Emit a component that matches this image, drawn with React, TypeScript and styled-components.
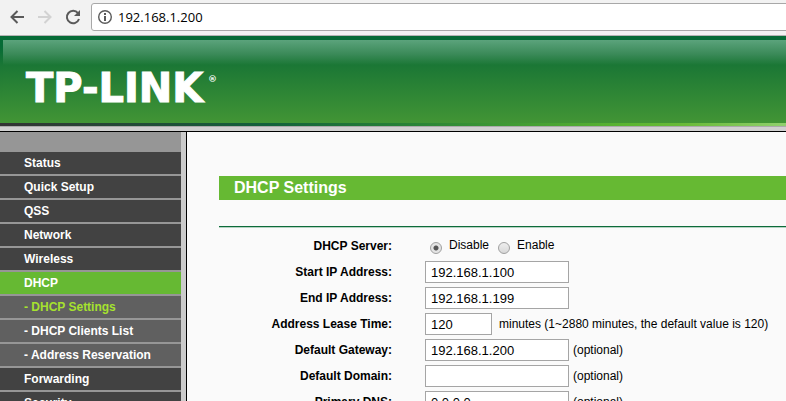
import React from 'react';
import styled, { createGlobalStyle } from 'styled-components';

const GlobalStyle = createGlobalStyle`
  * { box-sizing: border-box; }
  body {
    margin: 0;
    overflow: hidden;
    background: #fafafa;
    color: #000;
    font-family: 'Liberation Sans', Arial, sans-serif;
    font-size: 12px;
  }
`;

const Page = styled.div`
  display: flex;
  flex-direction: column;
  height: 100vh;
  overflow: hidden;
`;

const BrowserBar = styled.div`
  display: flex;
  align-items: center;
  flex: none;
  height: 36px;
  padding-left: 8px;
  padding-bottom: 1px;
  background: #f2f2f2;
  border-bottom: 1px solid #b4b4b4;
`;

const ToolButton = styled.button<{ $muted?: boolean }>`
  display: flex;
  width: 28px;
  padding: 0;
  border: 0;
  background: none;
  color: ${({ $muted }) => ($muted ? '#d2d2d2' : '#5a5a5a')};
`;

const AddressBox = styled.label`
  display: flex;
  align-items: center;
  flex: 1;
  height: 28px;
  margin-right: -4px;
  margin-left: -1px;
  padding-left: 5px;
  gap: 5px;
  background: #fff;
  border: 1px solid #a8a8a8;
  border-radius: 3px;
`;

const AddressInput = styled.input`
  flex: 1;
  padding: 0;
  border: 0;
  outline: 0;
  background: none;
  font: 13px/20px 'Open Sans', 'Noto Sans', sans-serif;
  color: #000;
`;

const Banner = styled.header`
  flex: none;
  padding: 4px 0 0 3px;
  background: linear-gradient(#066b36 0, #066b36 10px, #1b7735 30px, #429535 100%);
`;

const BannerFace = styled.div`
  height: 83px;
  padding: 24px 0 0 23px;
  background: linear-gradient(#5ba37c 0, #3b8a59 14px, #1b7735 25px, #429535 100%);
`;

const Logo = styled.svg`
  display: block;
  width: 208px;
  height: 52px;
  overflow: visible;
  fill: #fff;
  stroke: #fff;
  font-family: 'DejaVu Sans', sans-serif;
  font-weight: bold;
`;

const AccentStrip = styled.div`
  flex: none;
  height: 3px;
  background: linear-gradient(90deg, #333 0, #12613b 34%, #288236 52%, #5bb531 80%, #69ba38 87%, #91d06e 100%);
`;

const Divider = styled.div`
  flex: none;
  height: 6px;
  background: #d0d0d0;
  border-top: 1px solid #aaa;
  border-bottom: 1px solid #000;
`;

const Body = styled.div`
  display: flex;
  flex: 1;
  min-height: 0;
`;

const Sidebar = styled.nav`
  flex: none;
  width: 187px;
  background: #969696;
  border-right: 1px solid #000;
`;

const SidebarInner = styled.div`
  height: 100%;
  padding-top: 20px;
  border-right: 5px solid #cbcbcb;
`;

const MenuList = styled.ul`
  display: flex;
  flex-direction: column;
  gap: 2px;
  margin: 0;
  padding: 0;
  list-style: none;
`;

type Kind = 'top' | 'active' | 'sub' | 'current';

const menuColor: Record<Kind, string> = {
  top: '#424242',
  active: '#66b933',
  sub: '#606060',
  current: '#606060',
};

const MenuLink = styled.a<{ $kind: Kind }>`
  display: block;
  height: 22px;
  padding-left: 24px;
  line-height: 22px;
  font-weight: bold;
  text-decoration: none;
  background: ${({ $kind }) => menuColor[$kind]};
  color: ${({ $kind }) => ($kind === 'current' ? '#a6e22e' : '#fff')};
`;

const Main = styled.main`
  flex: 1;
  min-width: 0;
  padding: 44px 0 0 32px;
`;

const Title = styled.h1`
  margin: 0 0 26px;
  padding-left: 15px;
  background: #66b933;
  color: #fff;
  font-size: 16px;
  line-height: 24px;
`;

const Rule = styled.hr`
  height: 2px;
  margin: 0 0 5px;
  border: 0;
  border-top: 1px solid #0d6b3a;
  background: #b5d3c2;
`;

const Row = styled.div`
  display: grid;
  grid-template-columns: 173px 1fr;
  column-gap: 33px;
  align-items: center;
  height: 26px;
`;

const Label = styled.label`
  text-align: right;
  font-weight: bold;
  line-height: 16px;
  white-space: nowrap;
`;

const Controls = styled.div`
  display: flex;
  align-items: center;
  white-space: nowrap;
`;

const Field = styled.input<{ $short?: boolean }>`
  width: ${({ $short }) => ($short ? 67 : 144)}px;
  height: 22px;
  margin-right: ${({ $short }) => ($short ? 7 : 4)}px;
  padding: 0 5px;
  border: 1px solid #a5a5a5;
  background: #fff;
  color: #000;
  font: 13px 'Liberation Sans', Arial, sans-serif;
`;

const Choice = styled.label`
  display: flex;
  align-items: center;
  gap: 7px;
  padding-left: 5px;
  padding-bottom: 2px;
  margin-right: 4px;
  line-height: 16px;
`;

const Radio = styled.input`
  appearance: none;
  width: 12px;
  height: 12px;
  margin: 5px 0 0;
  border: 1px solid #a0a0a0;
  border-radius: 50%;
  background: linear-gradient(#eee, #d8d8d8);
  &:checked {
    background: radial-gradient(circle, #555 0, #555 2px, #e4e4e4 3px);
  }
`;

const menu: { text: string; kind: Kind }[] = [
  { text: 'Status', kind: 'top' },
  { text: 'Quick Setup', kind: 'top' },
  { text: 'QSS', kind: 'top' },
  { text: 'Network', kind: 'top' },
  { text: 'Wireless', kind: 'top' },
  { text: 'DHCP', kind: 'active' },
  { text: '- DHCP Settings', kind: 'current' },
  { text: '- DHCP Clients List', kind: 'sub' },
  { text: '- Address Reservation', kind: 'sub' },
  { text: 'Forwarding', kind: 'top' },
  { text: 'Security', kind: 'top' },
];

const fields: { id: string; label: string; value: string; note?: string; short?: boolean }[] = [
  { id: 'start', label: 'Start IP Address:', value: '192.168.1.100' },
  { id: 'end', label: 'End IP Address:', value: '192.168.1.199' },
  {
    id: 'lease',
    label: 'Address Lease Time:',
    value: '120',
    note: 'minutes (1~2880 minutes, the default value is 120)',
    short: true,
  },
  { id: 'gateway', label: 'Default Gateway:', value: '192.168.1.200', note: '(optional)' },
  { id: 'domain', label: 'Default Domain:', value: '', note: '(optional)' },
  { id: 'dns', label: 'Primary DNS:', value: '0.0.0.0', note: '(optional)' },
];

const ArrowIcon = ({ forward }: { forward?: boolean }) => (
  <svg width="18" height="18" viewBox="0 0 18 18" fill="none" stroke="currentColor" strokeWidth="2">
    <path d={forward ? 'M2 9h12M8.5 3 14.5 9 8.5 15' : 'M16 9H4M9.5 3 3.5 9 9.5 15'} />
  </svg>
);

const ReloadIcon = () => (
  <svg width="18" height="18" viewBox="0 0 18 18" fill="none" stroke="currentColor" strokeWidth="2">
    <path d="M14 5.2A6.2 6.2 0 1 0 15 11" />
    <path d="M16 2v6h-6z" fill="currentColor" stroke="none" />
  </svg>
);

const InfoIcon = () => (
  <svg width="16" height="16" viewBox="0 0 16 16" fill="none" stroke="#5a5a5a">
    <circle cx="8" cy="8" r="6.3" strokeWidth="1.4" />
    <path d="M8 7v5M8 4v2" strokeWidth="2" />
  </svg>
);

export default function App() {
  return (
    <Page>
      <GlobalStyle />
      <BrowserBar>
        <ToolButton aria-label="Back"><ArrowIcon /></ToolButton>
        <ToolButton aria-label="Forward" $muted><ArrowIcon forward /></ToolButton>
        <ToolButton aria-label="Reload"><ReloadIcon /></ToolButton>
        <AddressBox>
          <InfoIcon />
          <AddressInput aria-label="Address" defaultValue="192.168.1.200" />
        </AddressBox>
      </BrowserBar>
      <Banner>
        <BannerFace>
          <Logo role="img" aria-label="TP-LINK">
            <text x="0" y="38" fontSize="40" strokeWidth="1">TP-LINK</text>
            <text x="182" y="18" fontSize="9" strokeWidth="0">®</text>
          </Logo>
        </BannerFace>
      </Banner>
      <AccentStrip />
      <Divider />
      <Body>
        <Sidebar>
          <SidebarInner>
            <MenuList>
              {menu.map(({ text, kind }) => (
                <li key={text}><MenuLink href="#" $kind={kind}>{text}</MenuLink></li>
              ))}
            </MenuList>
          </SidebarInner>
        </Sidebar>
        <Main>
          <Title>DHCP Settings</Title>
          <Rule />
          <Row role="radiogroup" aria-labelledby="server-label">
            <Label as="span" id="server-label">DHCP Server:</Label>
            <Controls>
              <Choice><Radio type="radio" name="server" defaultChecked />Disable</Choice>
              <Choice><Radio type="radio" name="server" />Enable</Choice>
            </Controls>
          </Row>
          {fields.map(({ id, label, value, note, short }) => (
            <Row key={id}>
              <Label htmlFor={id}>{label}</Label>
              <Controls>
                <Field id={id} defaultValue={value} $short={short} />
                {note && <span>{note}</span>}
              </Controls>
            </Row>
          ))}
        </Main>
      </Body>
    </Page>
  );
}
